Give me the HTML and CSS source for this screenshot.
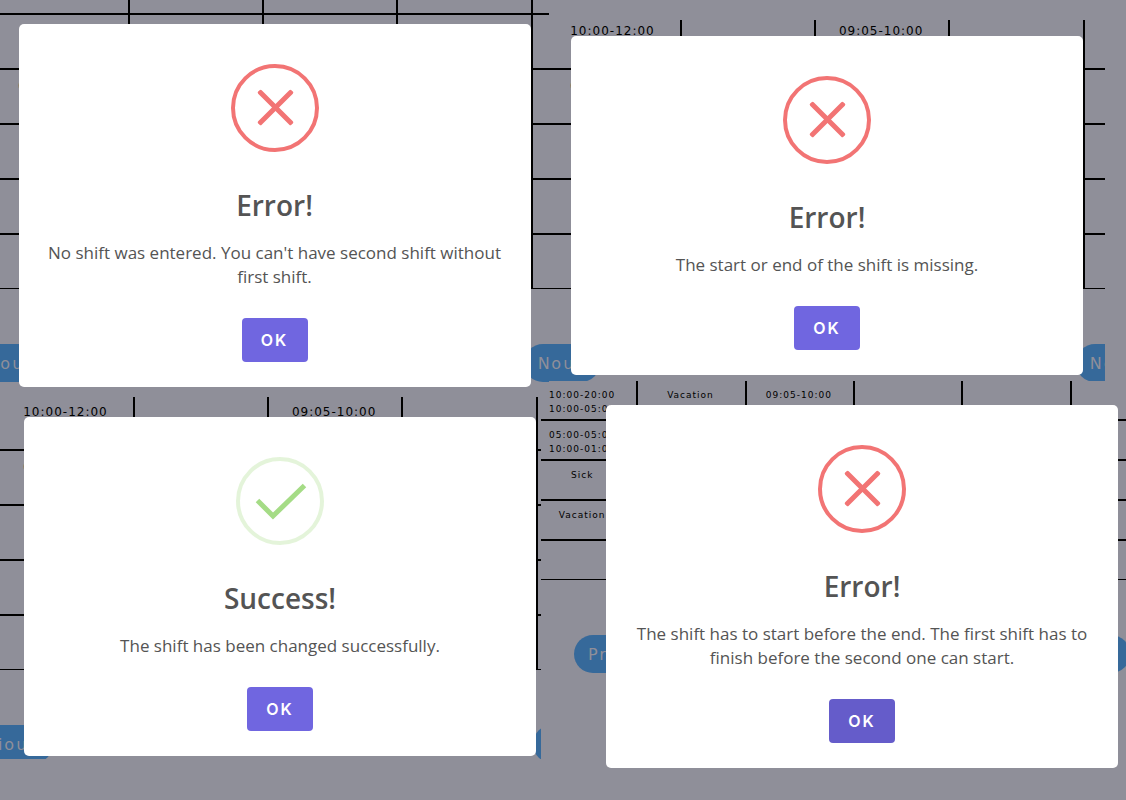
FILE: index.html
```html
<!DOCTYPE html>
<html lang="en">
<head>
<meta charset="utf-8">
<meta name="viewport" content="width=device-width, initial-scale=1">
<title>Shift messages</title>
<link rel="stylesheet" href="styles.css">
</head>
<body>
<svg class="symbols" aria-hidden="true">
  <symbol id="icon-error" viewBox="0 0 88 88">
    <circle cx="44" cy="44" r="42" fill="none" stroke="#f27474" stroke-width="4"/>
    <rect x="21" y="41" width="47" height="5" rx="1.5" fill="#f27474" transform="rotate(45 44.5 43.5)"/>
    <rect x="21" y="41" width="47" height="5" rx="1.5" fill="#f27474" transform="rotate(-45 44.5 43.5)"/>
  </symbol>
  <symbol id="icon-success" viewBox="0 0 88 88">
    <circle cx="44" cy="44" r="42" fill="none" stroke="#a5dc86" stroke-opacity=".3" stroke-width="4"/>
    <path d="M21.5 43.5 L37 59 L68.5 28.5" fill="none" stroke="#a5dc86" stroke-width="5"/>
  </symbol>
</svg>
<main class="gallery">
  <div class="row">
    <section class="panel panel-a">
      <div class="board">
        <table class="shifts">
          <tbody>
            <tr><td></td><td></td><td></td><td></td><td></td><td></td></tr>
            <tr><td></td><td></td><td></td><td></td><td></td><td></td></tr>
            <tr><td></td><td>05:00-05:00</td><td></td><td></td><td></td><td></td></tr>
            <tr><td></td><td></td><td></td><td></td><td></td><td></td></tr>
            <tr><td></td><td></td><td></td><td></td><td></td><td></td></tr>
            <tr><td></td><td></td><td></td><td></td><td></td><td></td></tr>
          </tbody>
        </table>
        <nav class="pager"><button type="button">Previous</button><button type="button">Next</button></nav>
      </div>
      <div class="dialog" role="alertdialog" aria-labelledby="t1" aria-describedby="d1">
        <svg class="icon" aria-hidden="true"><use href="#icon-error"/></svg>
        <h2 id="t1">Error!</h2>
        <p id="d1">No shift was entered. You can't have second shift without first shift.</p>
        <button class="ok" type="button">OK</button>
      </div>
    </section>
    <section class="panel panel-b">
      <div class="board">
        <table class="shifts">
          <tbody>
            <tr><td></td><td>10:00-12:00</td><td></td><td>09:05-10:00</td><td></td><td></td></tr>
            <tr><td></td><td>05:00-05:00</td><td></td><td></td><td></td><td></td></tr>
            <tr><td></td><td></td><td></td><td></td><td></td><td></td></tr>
            <tr><td></td><td></td><td></td><td></td><td></td><td></td></tr>
            <tr><td></td><td></td><td></td><td></td><td></td><td></td></tr>
          </tbody>
        </table>
        <nav class="pager"><button type="button">Previous</button><button type="button">Next</button></nav>
      </div>
      <div class="dialog" role="alertdialog" aria-labelledby="t2" aria-describedby="d2">
        <svg class="icon" aria-hidden="true"><use href="#icon-error"/></svg>
        <h2 id="t2">Error!</h2>
        <p id="d2">The start or end of the shift is missing.</p>
        <button class="ok" type="button">OK</button>
      </div>
    </section>
  </div>
  <div class="row">
    <section class="panel panel-c">
      <div class="board">
        <table class="shifts">
          <tbody>
            <tr><td></td><td>10:00-12:00</td><td></td><td>09:05-10:00</td><td></td><td></td></tr>
            <tr><td></td><td>05:00-05:00</td><td></td><td></td><td></td><td></td></tr>
            <tr><td></td><td></td><td></td><td></td><td></td><td></td></tr>
            <tr><td></td><td></td><td></td><td></td><td></td><td></td></tr>
            <tr><td></td><td></td><td></td><td></td><td></td><td></td></tr>
          </tbody>
        </table>
        <nav class="pager"><button type="button">Previous</button><button type="button">Next</button></nav>
      </div>
      <div class="dialog" role="alertdialog" aria-labelledby="t3" aria-describedby="d3">
        <svg class="icon" aria-hidden="true"><use href="#icon-success"/></svg>
        <h2 id="t3">Success!</h2>
        <p id="d3">The shift has been changed successfully.</p>
        <button class="ok" type="button">OK</button>
      </div>
    </section>
    <section class="panel panel-d">
      <div class="board">
        <table class="shifts compact">
          <tbody>
            <tr><td>10:00-20:00<br>10:00-05:00</td><td>Vacation</td><td>09:05-10:00</td><td></td><td></td><td></td></tr>
            <tr><td>05:00-05:00<br>10:00-01:00</td><td></td><td></td><td></td><td></td><td></td></tr>
            <tr><td>Sick</td><td></td><td></td><td></td><td></td><td></td></tr>
            <tr><td>Vacation</td><td></td><td></td><td></td><td></td><td></td></tr>
            <tr><td></td><td></td><td></td><td></td><td></td><td></td></tr>
          </tbody>
        </table>
        <nav class="pager"><button type="button">Previous</button><button type="button">Next</button></nav>
      </div>
      <div class="dialog" role="alertdialog" aria-labelledby="t4" aria-describedby="d4">
        <svg class="icon" aria-hidden="true"><use href="#icon-error"/></svg>
        <h2 id="t4">Error!</h2>
        <p id="d4">The shift has to start before the end. The first shift has to finish before the second one can start.</p>
        <button class="ok pressed" type="button">OK</button>
      </div>
    </section>
  </div>
</main>
</body>
</html>
```
FILE: styles.css
```css
* { box-sizing: border-box; }

body {
  margin: 0;
  background: #8f8f99;
  color: #000;
  font-family: "DejaVu Sans", Verdana, sans-serif;
  overflow-x: hidden;
}

.symbols { display: none; }

.gallery {
  display: flex;
  flex-direction: column;
  min-height: 100vh;
}

.row { display: flex; }

/* The board and its dialog share one grid cell, so the dialog lies on top. */
.panel {
  display: grid;
  grid-template-columns: minmax(0, 1fr);
  min-width: 0;
}

.panel-a { flex: 549; height: 381px; }
.panel-b { flex: 556; height: 381px; margin-right: 21px; }
.panel-c { flex: 541; }
.panel-d { flex: 585; }

.board,
.dialog { grid-area: 1 / 1; }

.board {
  overflow: hidden;
  align-self: start;
  min-width: 0;
}

.panel-a .board { height: 382px; }
.panel-b .board { height: 361px; margin-top: 20px; }
.panel-c .board { height: 362px; margin-top: 16px; }
.panel-d .board { height: 419px; }

.shifts {
  table-layout: fixed;
  width: 806px;
  border-collapse: separate;
  border-spacing: 0;
  font-size: 12px;
  line-height: 20px;
  letter-spacing: 1px;
  text-align: center;
}

.shifts td {
  height: 55px;
  padding: 6px 2px 0 0;
  border-right: 2px solid #000;
  border-bottom: 2px solid #000;
  vertical-align: top;
}

.shifts tr:last-child td {
  height: 54px;
  border-bottom-width: 1px;
}

.panel-a .shifts { margin: -40px 0 0 -139px; }
.panel-b .shifts { margin: -5px 0 0 -136px; }
.panel-c .shifts { margin: -1px 0 0 -134px; }
.panel-c .shifts td:first-child { border-right: 0; }

.shifts.compact {
  width: 650px;
  margin-left: -11px;
  font-size: 9px;
  line-height: 14px;
}

.shifts.compact td { height: 40px; padding-top: 7px; }
.shifts.compact tr:last-child td { height: 39px; }

.pager {
  display: flex;
  justify-content: space-between;
  margin-top: 55px;
}

.pager button {
  height: 38px;
  padding: 0 14px;
  border: 0;
  border-radius: 19px;
  background: #36699a;
  color: #8f8f99;
  font: 16px "DejaVu Sans", Verdana, sans-serif;
  letter-spacing: 2px;
}

.panel-a .pager { margin-left: -63px; margin-right: -48px; }
.panel-b .pager { margin-left: -61px; margin-right: -44px; }
.panel-c .pager { margin-left: -59px; margin-right: -65px; }
.panel-d .pager { margin-left: 33px; margin-right: -4px; }

.dialog {
  position: relative;
  z-index: 1;
  display: flex;
  flex-direction: column;
  align-items: center;
  align-self: start;
  justify-self: center;
  width: 100%;
  max-width: 512px;
  padding: 40px 28px 25px;
  border-radius: 5px;
  background: #fff;
  color: #545454;
  font-family: "Open Sans", "Noto Sans", sans-serif;
  text-align: center;
}

.panel-a .dialog { margin-top: 24px; }
.panel-b .dialog { margin-top: 36px; }
.panel-c .dialog { margin-top: 36px; margin-left: 19px; }
.panel-d .dialog { margin-top: 24px; margin-left: 57px; }

.icon { width: 88px; height: 88px; }

.dialog h2 {
  margin: 35px 0 0;
  font-size: 28px;
  font-weight: 600;
  line-height: 36px;
}

.dialog p {
  margin: 18px 0 29px;
  font-size: 17px;
  line-height: 24px;
}

.ok {
  width: 66px;
  height: 44px;
  padding: 0;
  border: 0;
  border-radius: 4px;
  background: #7066e0;
  color: #fff;
  font: 600 16px Inter, sans-serif;
  letter-spacing: 2px;
}

.ok.pressed { background: #655cca; }
```
